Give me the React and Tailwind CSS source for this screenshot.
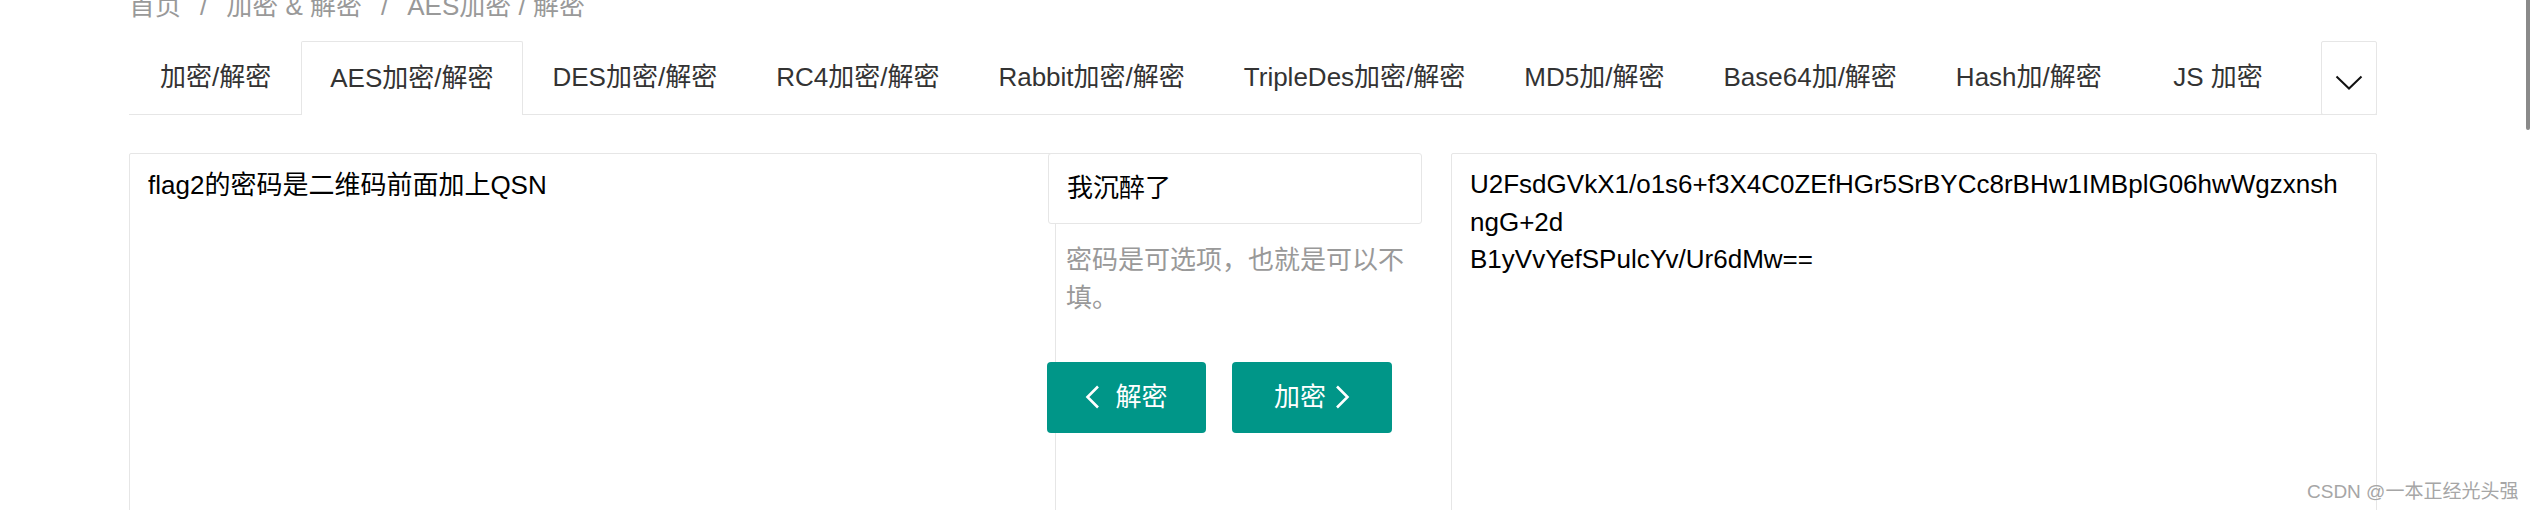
import React from 'react';

const tabs = [
    { label: '加密/解密', first: true },
    { label: 'AES加密/解密', active: true },
    { label: 'DES加密/解密' },
    { label: 'RC4加密/解密' },
    { label: 'Rabbit加密/解密' },
    { label: 'TripleDes加密/解密' },
    { label: 'MD5加/解密' },
    { label: 'Base64加/解密' },
    { label: 'Hash加/解密' },
    { label: 'JS 加密', wide: true },
];

const ChevronLeft = () => (
    <svg width="15" height="24" viewBox="0 0 15 24" fill="none">
        <polyline points="13,1.5 2.5,12 13,22.5" stroke="white" strokeWidth="2.6" />
    </svg>
);

const ChevronRight = () => (
    <svg width="15" height="24" viewBox="0 0 15 24" fill="none">
        <polyline points="2,1.5 12.5,12 2,22.5" stroke="white" strokeWidth="2.6" />
    </svg>
);

const Breadcrumb = () => (
    <div className="shrink-0 h-[48px] -mt-[7px] flex items-start leading-none text-[26px] text-[#999]">
        <span>首页</span>
        <span className="mx-[19px]">/</span>
        <span>加密 &amp; 解密</span>
        <span className="mx-[19px]">/</span>
        <span>AES加密 / 解密</span>
    </div>
);

const TabBar = () => (
    <div className="shrink-0 flex items-start h-[74px] border-b border-[#e6e6e6]">
        {tabs.map(tab => {
            if (tab.active) {
                return (
                    <div
                        key={tab.label}
                        className="h-[74px] flex items-center px-[28.5px] bg-white border border-b-0 border-[#e6e6e6] rounded-t-[2px] text-[26px] text-[#333]"
                    >
                        {tab.label}
                    </div>
                );
            }
            let pad = 'px-[29.5px]';
            if (tab.first) pad = 'pl-[31px] pr-[29.5px]';
            if (tab.wide) pad = 'pl-[42px] pr-[29.5px]';
            return (
                <div key={tab.label} className={`h-[73px] flex items-center text-[26px] text-[#333] ${pad}`}>
                    {tab.label}
                </div>
            );
        })}
        {/* More tabs */}
        <div className="ml-auto w-[56px] h-[74px] flex items-center justify-center border border-[#e6e6e6] rounded-[2px] bg-white">
            <svg width="28" height="15" viewBox="0 0 28 15" fill="none" className="mt-[8px]">
                <polyline points="1.5,1.5 14,13.5 26.5,1.5" stroke="#111" strokeWidth="2" />
            </svg>
        </div>
    </div>
);

export default function App() {
    return (
        <div
            className="relative h-[510px] w-full overflow-hidden bg-white flex"
            style={{ fontFamily: '"Liberation Sans", "Noto Sans CJK SC", sans-serif' }}
        >
            <div className="ml-[129px] w-[2248px] shrink-0 flex flex-col">
                <Breadcrumb />
                <TabBar />

                {/* Panels */}
                <div className="shrink-0 mt-[38px] flex items-start h-[400px]">
                    {/* Plain text */}
                    <div className="w-[927px] h-full border border-[#e6e6e6] rounded-[2px] px-[18px] pt-[12px] text-[26px] leading-[38px] text-black">
                        flag2的密码是二维码前面加上QSN
                    </div>

                    {/* Password + actions */}
                    <div className="-ml-[8px] w-[374px] flex flex-col">
                        <div className="h-[71px] flex items-center px-[18px] bg-white border border-[#e6e6e6] rounded-[3px] text-[26px] text-black">
                            我沉醉了
                        </div>
                        <div className="mt-[17px] pl-[18px] text-[26px] leading-[38.4px] text-[#999]">
                            密码是可选项，也就是可以不
                            <br />
                            填。
                        </div>
                        <div className="mt-[44px] -ml-px flex gap-[26px]">
                            <button className="w-[159px] h-[71px] flex items-center justify-center gap-[15px] bg-[#009688] rounded-[4px] text-white text-[26px]">
                                <ChevronLeft />
                                <span>解密</span>
                            </button>
                            <button className="w-[160px] h-[71px] flex items-center justify-center gap-[9px] bg-[#009688] rounded-[4px] text-white text-[26px]">
                                <span>加密</span>
                                <ChevronRight />
                            </button>
                        </div>
                    </div>

                    {/* Cipher text */}
                    <div className="ml-[29px] flex-1 h-full border border-[#e6e6e6] rounded-[2px] px-[18px] pt-[12px] text-[26px] leading-[37.5px] text-black whitespace-nowrap">
                        <div>U2FsdGVkX1/o1s6+f3X4C0ZEfHGr5SrBYCc8rBHw1IMBplG06hwWgzxnsh</div>
                        <div>ngG+2d</div>
                        <div>B1yVvYefSPulcYv/Ur6dMw==</div>
                    </div>
                </div>
            </div>

            {/* Scrollbar */}
            <div className="flex-1 flex justify-end pr-[3px]">
                <div className="w-[4px] h-[130px] bg-[#8a8a8a] rounded-b-[2px]" />
            </div>

            {/* Watermark */}
            <div className="absolute left-[2307px] top-[480px] text-[19px] leading-[24px] text-[#a6a6a6] whitespace-nowrap">
                CSDN @一本正经光头强
            </div>
        </div>
    );
}
